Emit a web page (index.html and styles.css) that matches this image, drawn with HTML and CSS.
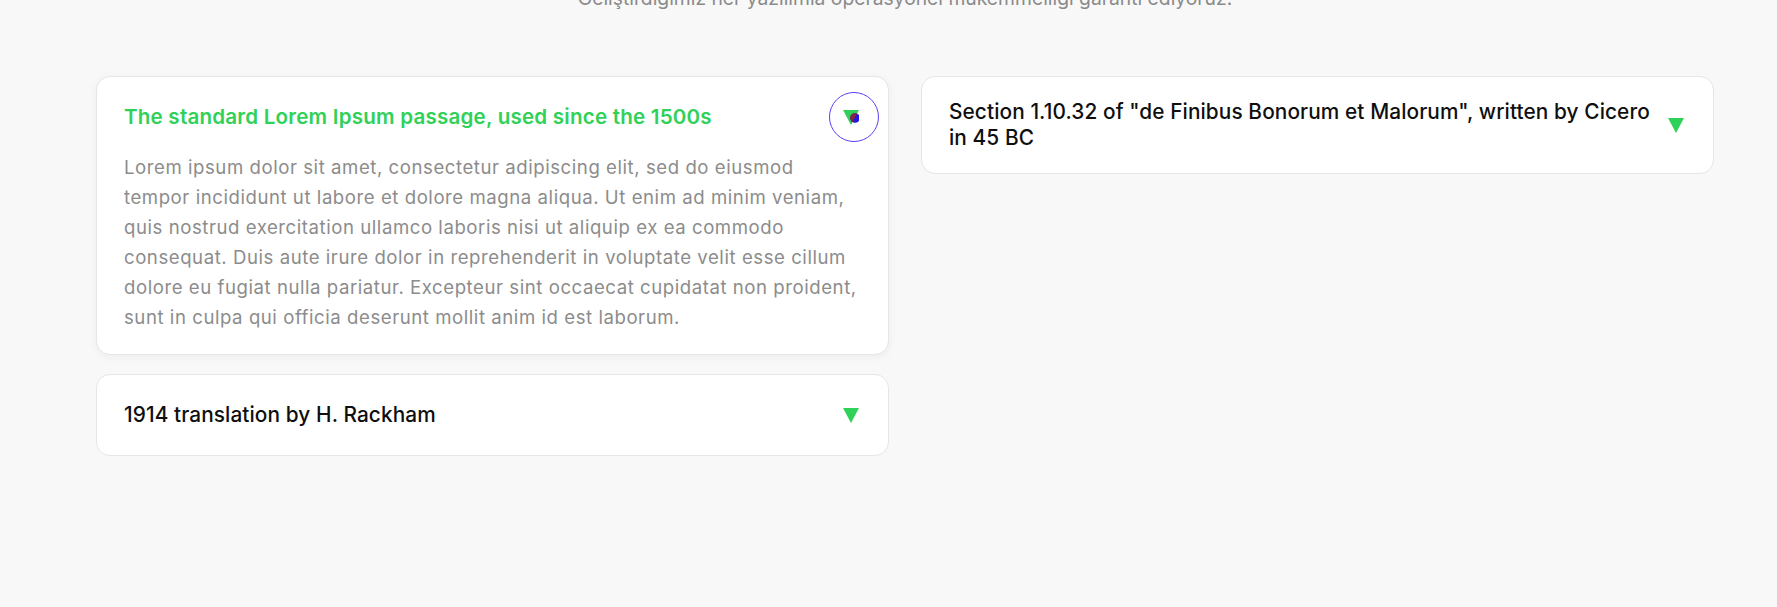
FILE: index.html
```html
<!DOCTYPE html>
<html lang="tr">
<head>
<meta charset="utf-8">
<title>Sıkça Sorulan Sorular</title>
<link rel="stylesheet" href="styles.css">
</head>
<body>
<section class="faq">
  <p class="faq-lead">Geliştirdiğimiz her yazılımla operasyonel mükemmelliği garanti ediyoruz.</p>

  <div class="faq-grid">
    <div class="faq-col">
      <article class="panel is-open">
        <header class="panel-head">
          <h3 class="panel-title">The standard Lorem Ipsum passage, used since the 1500s</h3>
          <button class="panel-toggle is-focused" type="button" aria-expanded="true">
            <svg class="caret" width="16" height="15" viewBox="0 0 16 15" aria-hidden="true">
              <defs>
                <clipPath id="caret-clip"><polygon points="0,0 16,0 8,15"/></clipPath>
              </defs>
              <polygon points="0,0 16,0 8,15" fill="#30d158"/>
              <circle cx="12" cy="8" r="4.8" fill="#2516e6"/>
              <circle cx="12" cy="8" r="4.8" fill="#8a2438" clip-path="url(#caret-clip)"/>
            </svg>
          </button>
        </header>
        <div class="panel-body">
          <p>Lorem ipsum dolor sit amet, consectetur adipiscing elit, sed do eiusmod tempor incididunt ut labore et dolore magna aliqua. Ut enim ad minim veniam, quis nostrud exercitation ullamco laboris nisi ut aliquip ex ea commodo consequat. Duis aute irure dolor in reprehenderit in voluptate velit esse cillum dolore eu fugiat nulla pariatur. Excepteur sint occaecat cupidatat non proident, sunt in culpa qui officia deserunt mollit anim id est laborum.</p>
        </div>
      </article>

      <article class="panel">
        <header class="panel-head">
          <h3 class="panel-title">1914 translation by H. Rackham</h3>
          <button class="panel-toggle" type="button" aria-expanded="false">
            <svg class="caret" width="16" height="15" viewBox="0 0 16 15" aria-hidden="true">
              <polygon points="0,0 16,0 8,15" fill="#30d158"/>
            </svg>
          </button>
        </header>
      </article>
    </div>

    <div class="faq-col">
      <article class="panel">
        <header class="panel-head">
          <h3 class="panel-title">Section 1.10.32 of "de Finibus Bonorum et Malorum", written by Cicero in 45 BC</h3>
          <button class="panel-toggle" type="button" aria-expanded="false">
            <svg class="caret" width="16" height="15" viewBox="0 0 16 15" aria-hidden="true">
              <polygon points="0,0 16,0 8,15" fill="#30d158"/>
            </svg>
          </button>
        </header>
      </article>
    </div>
  </div>
</section>
</body>
</html>
```

FILE: styles.css
```css
* {
  box-sizing: border-box;
}

html, body {
  margin: 0;
  padding: 0;
}

body {
  background: #f8f8f8;
  font-family: "Inter", "Noto Sans", "Liberation Sans", sans-serif;
  color: #151515;
  height: 607px;
  overflow: hidden;
}

.faq {
  padding: 0 63px 0 96px;
}

.faq-lead {
  margin: -16px 0 0;
  text-align: center;
  font-size: 19.3px;
  line-height: 28px;
  color: #8a8a8a;
}

.faq-grid {
  margin-top: 64px;
  display: grid;
  grid-template-columns: 1fr 1fr;
  column-gap: 32px;
  align-items: start;
}

.faq-col {
  display: flex;
  flex-direction: column;
  gap: 19px;
}

.panel {
  background: #fff;
  border: 1px solid #e6e6e6;
  border-radius: 14px;
}

.panel.is-open {
  box-shadow: 0 2px 8px rgba(0, 0, 0, 0.05);
}

.panel-head {
  display: flex;
  align-items: center;
  justify-content: space-between;
  gap: 4px;
  padding: 22px 16px 22px 27px;
}

.panel-title {
  margin: 0;
  font-size: 20.8px;
  line-height: 26px;
  font-weight: 500;
  letter-spacing: 0.1px;
  color: #0f0f0f;
}

.is-open .panel-title {
  color: #30d158;
  font-weight: 600;
  font-size: 20.6px;
  letter-spacing: 0.2px;
}

.panel-toggle {
  flex: none;
  width: 36px;
  height: 36px;
  padding: 0 0 0 7px;
  border: 0;
  border-radius: 50%;
  background: transparent;
  display: flex;
  align-items: center;
  justify-content: flex-start;
  cursor: pointer;
}

.panel-toggle.is-focused {
  outline: 1.5px solid #5b3ff0;
  outline-offset: 6px;
}

.caret {
  display: block;
}

.panel-body {
  padding: 0 27px 22px;
  margin-top: -5px;
}

.panel-body p {
  margin: 0;
  font-size: 18.6px;
  line-height: 30px;
  letter-spacing: 0.55px;
  color: #8c8c8c;
}
```
